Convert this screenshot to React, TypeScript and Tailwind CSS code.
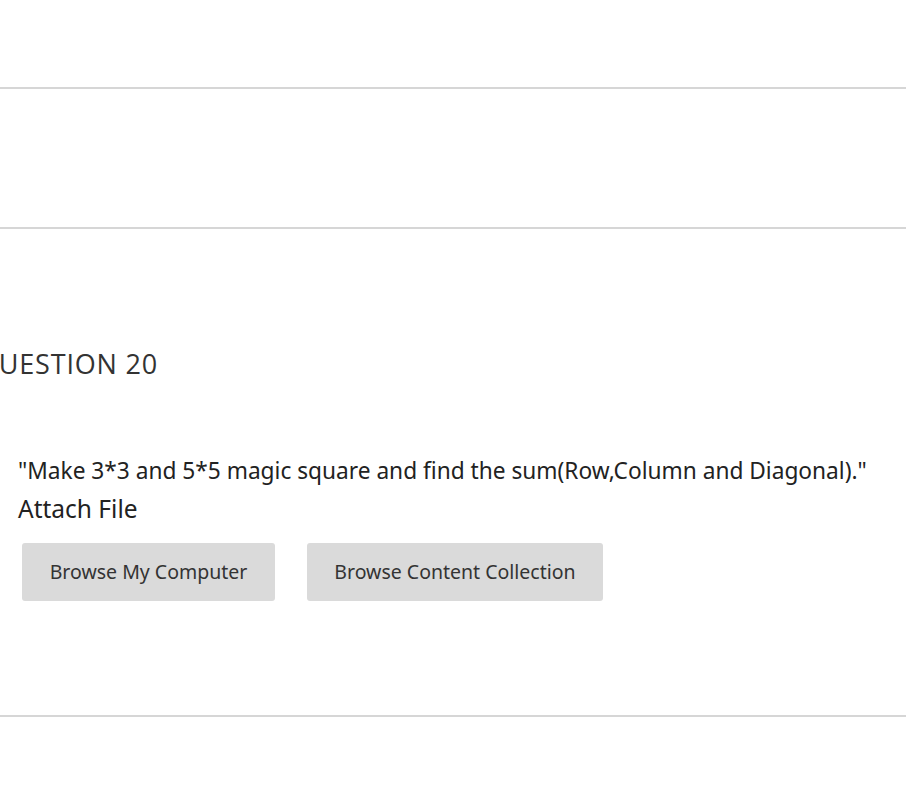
import React from "react";

export default function App() {
  return (
    <div className="w-[906px] h-[794px] bg-white overflow-hidden relative" style={{ fontFamily: '"Open Sans", sans-serif' }}>
      <div className="h-[87px]" />
      <div className="h-[2px] bg-[#d6d6d6]" />
      <div className="h-[138px]" />
      <div className="h-[2px] bg-[#d6d6d6]" />
      <div className="h-[115px]" />
      <h2 className="ml-[-23px] text-[27px] leading-[40px] tracking-[0.03em] text-[#333] font-normal" style={{ fontFamily: '"Open Sans", sans-serif' }}>
        QUESTION 20
      </h2>
      <div className="h-[68px]" />
      <div className="pl-[18px] text-[#222]" style={{ fontFamily: '"Noto Sans", sans-serif' }}>
        <p className="text-[22.7px] leading-[38px] whitespace-nowrap">"Make 3*3 and 5*5 magic square and find the sum(Row,Column and Diagonal)."</p>
        <p className="text-[24.5px] leading-[38px]">Attach File</p>
      </div>
      <div className="flex gap-[32px] pl-[22px] mt-[15px]" style={{ fontFamily: '"Noto Sans", sans-serif' }}>
        <button className="w-[253px] h-[58px] bg-[#dadada] rounded-[3px] text-[19.5px] text-[#333]">Browse My Computer</button>
        <button className="w-[296px] h-[58px] bg-[#dadada] rounded-[3px] text-[19.5px] text-[#333]">Browse Content Collection</button>
      </div>
      <div className="h-[114px]" />
      <div className="h-[2px] bg-[#d6d6d6]" />
    </div>
  );
}
